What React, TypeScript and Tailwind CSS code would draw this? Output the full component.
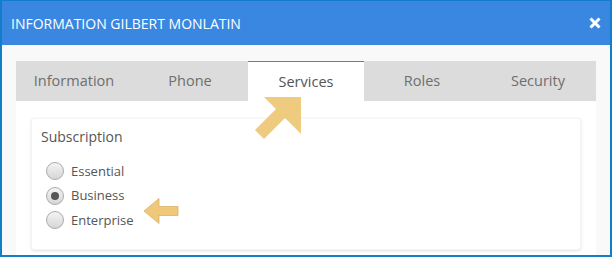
import React from "react";

const tabs = ["Information", "Phone", "Services", "Roles", "Security"];
const plans = [
  { label: "Essential", checked: false },
  { label: "Business", checked: true },
  { label: "Enterprise", checked: false },
];

function Radio({ checked }: { checked: boolean }) {
  return (
    <span className="flex h-[18px] w-[18px] items-center justify-center rounded-full border border-[#ababab] bg-gradient-to-b from-[#f4f4f4] to-[#d6d6d6]">
      {checked && <span className="h-[8px] w-[8px] rounded-full bg-[#555]" />}
    </span>
  );
}

export default function App() {
  return (
    <div
      className="relative flex h-[257px] w-[612px] flex-col overflow-hidden border-2 border-t border-[#127dc8] bg-[#f9f9f9]"
      style={{ fontFamily: '"Open Sans", "Noto Sans", sans-serif' }}
    >
      {/* titre */}
      <div className="flex h-[44px] shrink-0 items-center justify-between bg-[#3987e1] pl-[9px] pr-[9px]">
        <span className="text-[14px] text-white">INFORMATION GILBERT MONLATIN</span>
        <svg width="12" height="12" viewBox="0 0 12 12">
          <path d="M1.5 1.5 L10.5 10.5 M10.5 1.5 L1.5 10.5" stroke="#fff" strokeWidth="3" />
        </svg>
      </div>

      <div className="flex flex-1 flex-col px-[14px] pt-[16px]">
        {/* onglets */}
        <div className="grid h-[40px] shrink-0 grid-cols-5 bg-[#dcdcdc]">
          {tabs.map((t) => (
            <div
              key={t}
              className={
                t === "Services"
                  ? "flex items-center justify-center border-t border-[#3987e1] bg-white text-[14.5px] text-[#555]"
                  : "flex items-center justify-center text-[14.5px] text-[#6e6e6e]"
              }
            >
              {t}
            </div>
          ))}
        </div>

        <div className="flex-1 bg-white px-[15px] pt-[17px]">
          <div className="h-[132px] rounded-[3px] border border-[#f4f4f4] bg-white pl-[9px] pt-[8px] shadow-[0_1px_3px_rgba(0,0,0,0.12)]">
            <div className="text-[14px] leading-[20px] text-[#555]">Subscription</div>
            <div className="mt-[15px] flex flex-col gap-[6px] pl-[5px]">
              {plans.map((p) => (
                <div key={p.label} className="flex h-[18.5px] items-center gap-[7px]">
                  <Radio checked={p.checked} />
                  <span className="text-[13px] text-[#555]">{p.label}</span>
                </div>
              ))}
            </div>
          </div>
        </div>
      </div>

      {/* flèches d'annotation */}
      <svg className="pointer-events-none absolute left-0 top-0" width="612" height="257">
        <polygon
          points="299,96 262,96 274,108 253,129 262,138 283,117 299,133"
          fill="#eecb7e"
        />
        <polygon
          points="142,210 157,197.5 157,205.5 176,205.5 176,214.5 157,214.5 157,222.5"
          fill="#f0c87a"
          stroke="#d7b26a"
          strokeWidth="0.8"
        />
      </svg>
    </div>
  );
}
